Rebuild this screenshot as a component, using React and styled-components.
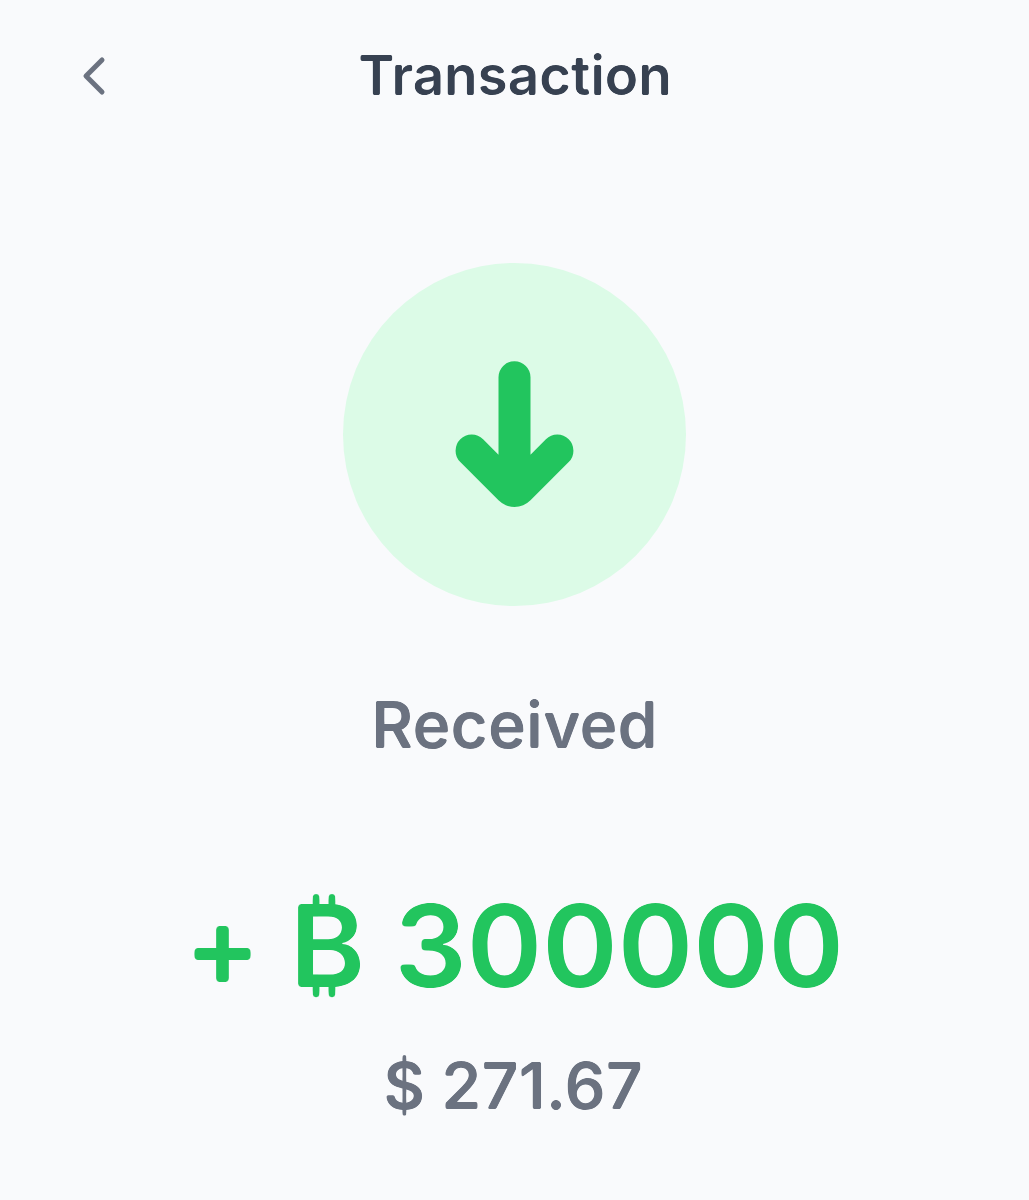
import styled, { createGlobalStyle } from "styled-components"

const GlobalStyle = createGlobalStyle`
  * {
    box-sizing: border-box;
  }

  body {
    margin: 0;
    background-color: #f9fafc;
    font-family: Inter, sans-serif;
  }
`

const Screen = styled.main`
  display: flex;
  flex-direction: column;
  align-items: center;
  min-height: 1200px;
  background-color: #f9fafc;
`

const Header = styled.header`
  display: grid;
  grid-template-columns: 130px 1fr 130px;
  align-items: center;
  width: 100%;
  height: 152px;
`

const BackButton = styled.button`
  display: flex;
  justify-content: center;
  padding: 0 0 0 58px;
  border: none;
  background: none;
  color: #6b7280;
  cursor: pointer;
`

const Title = styled.h1`
  margin: 0 0 2px 1px;
  text-align: center;
  font-size: 54.8px;
  line-height: 80px;
  font-weight: 600;
  color: #374151;
  filter: url(#round-small);
`

const Badge = styled.div`
  display: flex;
  justify-content: center;
  align-items: center;
  width: 343px;
  height: 343px;
  margin-top: 111px;
  border-radius: 50%;
  background-color: #dcfbe7;
  color: #22c55e;
`

const Label = styled.p`
  margin: ${(props) => props.$top}px ${(props) => props.$right || 0}px 0 0;
  font-size: 64.4px;
  line-height: 80px;
  font-weight: 600;
  color: #6b7280;
  filter: url(#round-small);
`

const Amount = styled.p`
  margin: 116px 1px 0 0;
  font-size: 114.4px;
  line-height: 130px;
  font-weight: 600;
  color: #22c55e;
  filter: url(#round-large);
`

const FilterDefs = styled.svg`
  display: block;
  width: 0;
  height: 0;
`

// rounds the outer corners of the glyphs: blur, sharpen the alpha again,
// then clip to the original so the inner corners stay crisp
function RoundFilter({ id, radius, slope }) {
  return (
    <filter id={id} colorInterpolationFilters="sRGB">
      <feGaussianBlur stdDeviation={radius} />
      <feComponentTransfer result="rounded">
        <feFuncA type="linear" slope={slope} intercept={(1.7 - slope) / 2} />
      </feComponentTransfer>
      <feComposite in="SourceGraphic" in2="rounded" operator="in" />
    </filter>
  )
}

function App() {
  return (
    <>
      <GlobalStyle />
      <FilterDefs aria-hidden="true">
        <RoundFilter id="round-small" radius={1.8} slope={4.5} />
        <RoundFilter id="round-large" radius={2.7} slope={6.5} />
      </FilterDefs>
      <Screen>
        <Header>
          <BackButton aria-label="Back">
            <svg width="28" height="44" viewBox="0 0 28 44" fill="none">
              <path
                d="M22 6L6 22L22 38"
                stroke="currentColor"
                strokeWidth="5"
                strokeLinecap="round"
                strokeLinejoin="round"
              />
            </svg>
          </BackButton>
          <Title>Transaction</Title>
        </Header>
        <Badge>
          <svg width="131" height="151" viewBox="-0.5 -0.5 131 151" fill="currentColor">
            <path d="M49 17.7a16 16 0 0 1 32 0V95.2L96.4 79.8a16 16 0 0 1 22.8 22.8L81 140.8a22.6 22.6 0 0 1-32 0L10.8 102.6a16 16 0 0 1 22.8-22.8L49 95.2z" />
          </svg>
        </Badge>
        <Label $top={79}>Received</Label>
        <Amount>+ ₿ 300000</Amount>
        <Label $top={35} $right={3}>
          $ 271.67
        </Label>
      </Screen>
    </>
  )
}

export default App
